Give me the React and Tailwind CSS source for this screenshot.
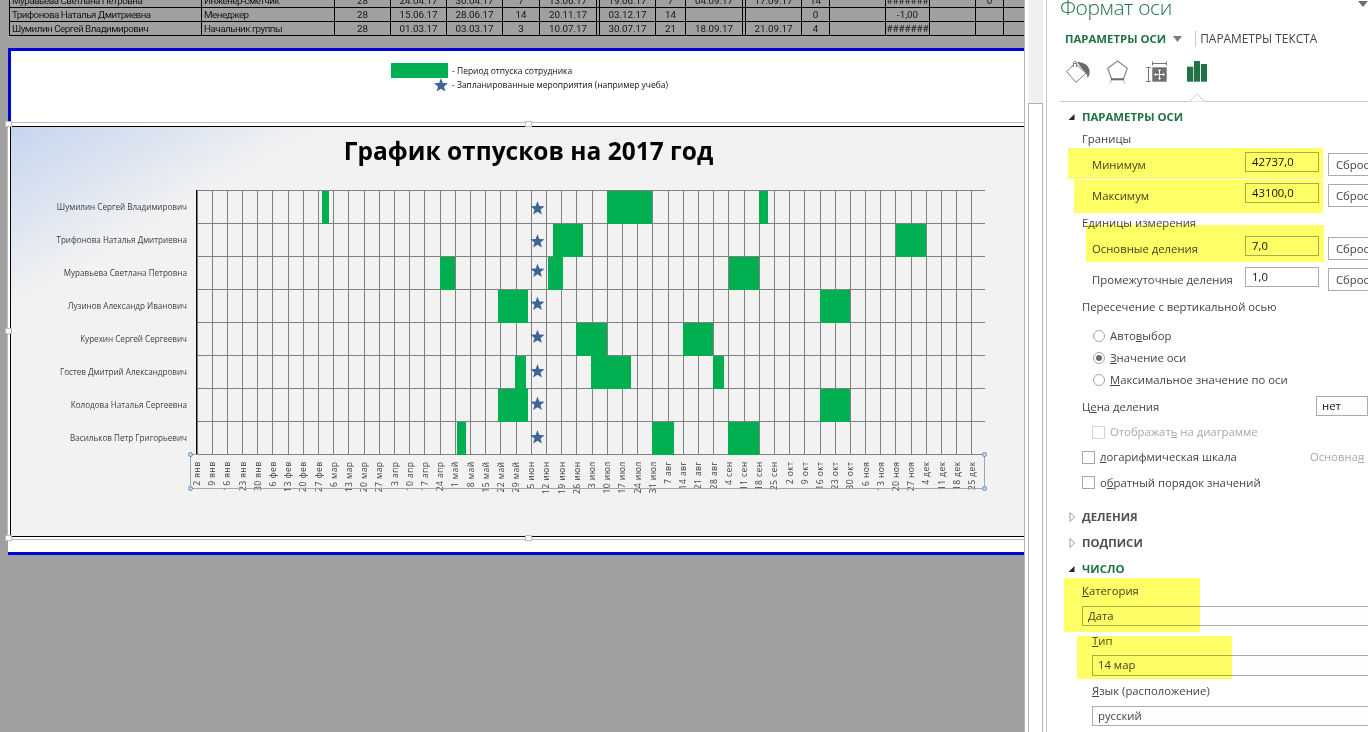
const BARS = [
  [[322, 329], [607, 652], [759, 768]],
  [[553, 583], [896, 926]],
  [[440, 455], [548, 563], [729, 759]],
  [[498, 528], [820, 850]],
  [[576, 607], [683, 713]],
  [[515, 526], [591, 631], [713, 724]],
  [[498, 528], [820, 850]],
  [[457, 466], [652, 674], [728, 759]],
];
const NAMES = [
  "Шумилин Сергей Владимирович",
  "Трифонова Наталья Дмитриевна",
  "Муравьева Светлана Петровна",
  "Лузинов Александр Иванович",
  "Курехин Сергей Сергеевич",
  "Гостев Дмитрий Александрович",
  "Колодова Наталья Сергеевна",
  "Васильков Петр Григорьевич",
];
const STAR_Y = [208.5, 241.5, 271, 304, 337, 371.5, 404, 437.5];
const MONTHS = [
  ["янв", [2, 9, 16, 23, 30]], ["фев", [6, 13, 20, 27]], ["мар", [6, 13, 20, 27]], ["апр", [3, 10, 17, 24]],
  ["май", [1, 8, 15, 22, 29]], ["июн", [5, 12, 19, 26]], ["июл", [3, 10, 17, 24, 31]], ["авг", [7, 14, 21, 28]],
  ["сен", [4, 11, 18, 25]], ["окт", [2, 9, 16, 23, 30]], ["ноя", [6, 13, 20, 27]], ["дек", [4, 11, 18, 25]],
];
const TICKS = MONTHS.flatMap(([m, ds]) => ds.map((d) => `${d} ${m}`));
const STEP = 788 / 363 * 7;

const COLS = [192, 133, 56, 56, 56, 37, 57, 3, 56, 30, 57, 3, 56, 28, 56, 44, 46, 28, 21];
const ROWS = [
  ["Муравьева Светлана Петровна", "Инженер-сметчик", "28", "24.04.17", "30.04.17", "7", "13.06.17", "", "19.06.17", "7", "04.09.17", "", "17.09.17", "14", "", "#######", "", "0", ""],
  ["Трифонова Наталья Дмитриевна", "Менеджер", "28", "15.06.17", "28.06.17", "14", "20.11.17", "", "03.12.17", "14", "", "", "", "0", "", "-1,00", "", "", ""],
  ["Шумилин Сергей Владимирович", "Начальник группы", "28", "01.03.17", "03.03.17", "3", "10.07.17", "", "30.07.17", "21", "18.09.17", "", "21.09.17", "4", "", "#######", "", "", ""],
];

function Star({ cx, cy, r = 7.5 }) {
  const pts = [];
  for (let i = 0; i < 10; i++) {
    const rad = i % 2 ? r * 0.42 : r;
    const a = -Math.PI / 2 + (i * Math.PI) / 5;
    pts.push(`${cx + rad * Math.cos(a)},${cy + rad * Math.sin(a)}`);
  }
  return <polygon points={pts.join(" ")} fill="#3d6496" />;
}

function Plot() {
  return (
    <svg width="1000" height="340" viewBox="11 185 1000 340" className="block shrink-0">
      {Array.from({ length: 9 }, (_, i) => (
        <line key={i} x1="196.5" x2="985" y1={190.5 + 33 * i} y2={190.5 + 33 * i} stroke="#808080" />
      ))}
      {TICKS.map((_, i) => {
        const x = Math.floor(197 + i * STEP) + 0.5;
        return <line key={i} x1={x} x2={x} y1="190" y2="454" stroke="#808080" />;
      })}
      <line x1="196.5" x2="196.5" y1="190" y2="454" stroke="#000" />
      {BARS.map((row, r) =>
        row.map(([a, b], i) => <rect key={i} x={a} y={191 + 33 * r} width={b - a} height="33" fill="#00b050" />)
      )}
      {STAR_Y.map((y, i) => <Star key={i} cx={537.5} cy={y} />)}
      {NAMES.map((n, i) => (
        <text key={n} x="187" y={210 + 33 * i} textAnchor="end" fontSize="8.1" fill="#404040">{n}</text>
      ))}
      {TICKS.map((t, i) => (
        <text key={t} transform={`translate(${200 + i * STEP} 461.5) rotate(-90)`} textAnchor="end" fontSize="8.6" letterSpacing="0.4" fill="#404040">{t}</text>
      ))}
      <path d="M190.5 454.5V488.5H984.5V454.5" fill="none" stroke="#a6a6a6" />
      <line x1="190.5" x2="197" y1="454.5" y2="454.5" stroke="#a6a6a6" />
      {[[190.5, 454.5], [190.5, 488.5], [984.5, 454.5], [984.5, 488.5]].map(([x, y]) => (
        <circle key={`${x}-${y}`} cx={x} cy={y} r="2" fill="#cfdcec" stroke="#5f8ab8" />
      ))}
    </svg>
  );
}

function Handle({ className }) {
  return <div className={`absolute w-[7px] h-[6px] bg-white border border-[#bdbdbd] ${className}`} />;
}

function Sheet() {
  return (
    <div className="mt-[12px] ml-[8px] w-[1017px] h-[507px] bg-white border-y-[3px] border-[#0000d8] flex flex-col shrink-0">
      <div className="h-[71px] border-l-[3px] border-[#0000d8] shrink-0 pt-[12px] pl-[380px] text-[8.5px] leading-[14px] text-[#111]">
        <div className="flex items-center h-[15px]">
          <div className="w-[57px] h-[15px] bg-[#00b050]" />
          <span className="ml-[4px]">- Период отпуска сотрудника</span>
        </div>
        <div className="flex items-center h-[14px]">
          <div className="w-[57px] flex justify-end">
            <svg width="16" height="14" viewBox="0 0 16 14"><Star cx={9} cy={7.5} /></svg>
          </div>
          <span className="ml-[4px]">- Запланированные мероприятия (например учеба)</span>
        </div>
      </div>
      <div className="relative h-[418px] -ml-[1px] shrink-0 border-y border-l border-[#bdbdbd] pt-[3px] pb-[2px] pl-[2px]">
        <div className="w-[1037px] h-[411px] border border-black bg-[linear-gradient(150deg,#c5d5ef_0%,#f2f2f2_18%)] flex flex-col">
          <div className="h-[58px] shrink-0 text-center text-[24.5px] font-bold leading-[47px] text-black">График отпусков на 2017 год</div>
          <Plot />
        </div>
        <Handle className="-left-[3px] -top-[2px]" />
        <Handle className="left-[517px] -top-[2px]" />
        <Handle className="-left-[3px] top-[205px]" />
        <Handle className="-left-[3px] top-[412px]" />
        <Handle className="left-[517px] top-[412px]" />
      </div>
    </div>
  );
}

function Table() {
  return (
    <div className="-mt-[7px] ml-[9px] shrink-0">
      <table className="table-fixed border-collapse w-[1016px] text-[9.8px] text-[#161616] font-['Roboto',sans-serif]">
        <colgroup>
          {COLS.map((w, i) => <col key={i} style={{ width: w }} />)}
        </colgroup>
        <tbody>
          {ROWS.map((r, i) => (
            <tr key={i} className="h-[14px]">
              {r.map((c, j) => (
                <td key={j} className={`border border-black p-0 h-[14px] leading-[12px] whitespace-nowrap overflow-hidden ${j < 2 ? "text-left pl-[2px] tracking-[-0.5px]" : "text-center"}`}>{c}</td>
              ))}
            </tr>
          ))}
        </tbody>
      </table>
    </div>
  );
}

function Triangle({ open }) {
  return open ? (
    <svg width="8" height="8" viewBox="0 0 8 8" className="shrink-0"><polygon points="6.5,1 6.5,7 0.5,7" fill="#262626" /></svg>
  ) : (
    <svg width="8" height="12" viewBox="0 0 8 12" className="shrink-0"><polygon points="2,1.5 6.5,6 2,10.5" fill="#fff" stroke="#9a9a9a" /></svg>
  );
}

function Section({ open, green, children, className = "" }) {
  return (
    <div className={`h-[16px] flex items-center pl-[21px] ${className}`}>
      <div className="w-[14px] flex shrink-0"><Triangle open={open} /></div>
      <span className={`text-[11.4px] font-bold leading-[16px] ${green ? "text-[#217346]" : "text-[#505050]"}`}>{children}</span>
    </div>
  );
}

function Label({ className = "", children }) {
  return <div className={`h-[16px] leading-[16px] whitespace-nowrap ${className}`}>{children}</div>;
}

function FieldRow({ label, value, className = "" }) {
  return (
    <div className={`h-[24px] flex items-start pl-[45px] ${className}`}>
      <div className="w-[153px] pt-[5px] leading-[16px] whitespace-nowrap shrink-0">{label}</div>
      <div className="w-[74px] h-[20px] border border-[#ababab] pl-[6px] leading-[18px] text-[#111] bg-white shrink-0">{value}</div>
      <div className="ml-[9px] mt-[1px] w-[60px] h-[23px] border border-[#ababab] bg-white pl-[7px] leading-[21px] shrink-0">Сброс</div>
    </div>
  );
}

function Radio({ checked, children, className = "" }) {
  return (
    <div className={`h-[16px] flex items-center pl-[46px] ${className}`}>
      <div className="w-[12px] h-[12px] rounded-full border border-[#a6a6a6] flex items-center justify-center shrink-0 bg-white">
        {checked && <div className="w-[6px] h-[6px] rounded-full bg-[#6e6e6e]" />}
      </div>
      <span className="ml-[5px] leading-[16px]">{children}</span>
    </div>
  );
}

function Check({ className = "", disabled, children }) {
  return (
    <div className={`h-[16px] flex items-center ${className}`}>
      <div className={`w-[13px] h-[13px] border shrink-0 ${disabled ? "border-[#d4d4d4]" : "border-[#a6a6a6]"}`} />
      <span className={`ml-[5px] leading-[16px] whitespace-nowrap ${disabled ? "text-[#a8a8a8]" : ""}`}>{children}</span>
    </div>
  );
}

function SelectBox({ className = "", children }) {
  return <div className={`border border-[#ababab] w-[400px] pl-[5px] leading-[17px] bg-[#fdfdfd] ${className}`}>{children}</div>;
}

function Panel() {
  return (
    <div className="w-[322px] shrink-0 h-full overflow-hidden bg-white text-[11.3px] text-[#444] flex flex-col relative border-l border-[#c6c6c6]" >
      <div className="-mt-[6px] h-[26px] pl-[13px] text-[21px] font-light tracking-[-0.4px] leading-[26px] text-[#217346] whitespace-nowrap shrink-0">Формат оси</div>
      <svg width="10" height="6" viewBox="0 0 10 6" className="absolute right-0 top-[1px]"><polygon points="0,0 10,0 5,6" fill="#6e6e6e" /></svg>

      <div className="mt-[10px] h-[17px] flex items-center pl-[18px] shrink-0 leading-[17px]">
        <span className="font-bold text-[11.4px] text-[#217346]">ПАРАМЕТРЫ ОСИ</span>
        <svg width="9" height="6" viewBox="0 0 9 6" className="ml-[7px]"><polygon points="0,0 9,0 4.5,6" fill="#7a7a7a" /></svg>
        <div className="ml-[13px] w-px h-[16px] bg-[#c6c6c6]" />
        <span className="ml-[4px] text-[11.9px]">ПАРАМЕТРЫ ТЕКСТА</span>
      </div>

      <div className="mt-[13px] h-[23px] flex items-start pl-[19px] shrink-0">
        <svg width="24" height="24" viewBox="0 0 24 24" fill="none">
          <path d="M0.7 11.7L9 3L20 13.3L10 22.3Z" stroke="#7a7a7a" />
          <path d="M7.5 7V3C7.5 0.8 10.5 0.8 10.5 3V7" stroke="#7a7a7a" />
          <path d="M11 2C16 2 22 4 23.5 10C24 14 23 16 21.5 18C21.5 15 20.5 13 18 11Z" fill="#6a6a6a" />
        </svg>
        <svg width="22" height="24" viewBox="0 0 22 24" fill="none" className="ml-[17px]">
          <polygon points="10.5,1 20.3,8.3 16.3,19.3 4.7,19.3 0.7,8.3" stroke="#8a8a8a" strokeWidth="1.2" />
          <line x1="4" y1="19.3" x2="17" y2="19.3" stroke="#6a6a6a" strokeWidth="2" />
          <path d="M4.5 20L3 23.5M16.5 20L18 23.5" stroke="#c4c4c4" strokeWidth="1.2" />
        </svg>
        <svg width="22" height="22" viewBox="0 0 22 22" fill="none" className="ml-[17px] mt-[1px]">
          <path d="M6.3 2.5H20.7M6.5 .5V4.5M20.5 .5V4.5M2.5 6.5V20.5M.3 6.5H4.7M.3 20.5H4.7" stroke="#757575" />
          <rect x="6.3" y="6.3" width="14.4" height="14.4" fill="#707070" />
          <path d="M13.5 9V18M9 13.5H18" stroke="#fff" />
          <path d="M13.5 8L11.8 10H15.2ZM13.5 19L11.8 17H15.2ZM8 13.5L10 11.8V15.2ZM19 13.5L17 11.8V15.2Z" fill="#fff" />
        </svg>
        <svg width="20" height="22" viewBox="0 0 20 22" className="ml-[19px] mt-[1px]">
          <rect x="0" y="5.7" width="6.3" height="15" fill="#217346" />
          <rect x="7" y="0" width="6" height="20.7" fill="#217346" />
          <rect x="14" y="3" width="6" height="17.7" fill="#217346" />
        </svg>
      </div>

      <div className="relative mt-[18px] ml-[13px] h-px bg-[#c8c8c8] shrink-0">
        <svg width="16" height="9" viewBox="0 0 16 9" className="absolute left-[129px] -top-[8px]">
          <polygon points="0,8.5 8,0.5 16,8.5" fill="#fff" />
          <path d="M0.5 8.5L8 0.7L15.5 8.5" fill="none" stroke="#c8c8c8" />
        </svg>
      </div>

      <Section open green className="mt-[7px] shrink-0">ПАРАМЕТРЫ ОСИ</Section>
      <Label className="mt-[6px] pl-[35px] shrink-0">Границы</Label>
      <FieldRow className="mt-[5px] shrink-0" label="Минимум" value="42737,0" />
      <FieldRow className="mt-[7px] shrink-0" label="Максимум" value="43100,0" />
      <Label className="mt-[8px] pl-[35px] shrink-0">Единицы измерения</Label>
      <FieldRow className="mt-[5px] shrink-0" label="Основные деления" value="7,0" />
      <FieldRow className="mt-[7px] shrink-0" label="Промежуточные деления" value="1,0" />
      <Label className="mt-[8px] pl-[35px] shrink-0">Пересечение с вертикальной осью</Label>
      <Radio className="mt-[13px] shrink-0">Авто<u>в</u>ыбор</Radio>
      <Radio checked className="mt-[6px] shrink-0"><u>З</u>начение оси</Radio>
      <Radio className="mt-[6px] shrink-0"><u>М</u>аксимальное значение по оси</Radio>
      <div className="mt-[8px] h-[20px] pl-[35px] flex items-center shrink-0">
        <div className="w-[234px] pt-[2px] shrink-0">Ц<u>е</u>на деления</div>
        <SelectBox className="h-[20px] text-[#111]">нет</SelectBox>
      </div>
      <Check disabled className="mt-[8px] pl-[45px] shrink-0">Отображат<u>ь</u> на диаграмме</Check>
      <div className="mt-[9px] flex items-center shrink-0">
        <Check className="pl-[35px]"><u>л</u>огарифмическая шкала</Check>
        <span className="ml-[73px] text-[#a8a8a8] whitespace-nowrap">Основна<u>я</u></span>
      </div>
      <Check className="mt-[9px] pl-[35px] shrink-0">о<u>б</u>ратный порядок значений</Check>
      <Section className="mt-[18px] shrink-0">ДЕЛЕНИЯ</Section>
      <Section className="mt-[10px] shrink-0">ПОДПИСИ</Section>
      <Section open green className="mt-[10px] shrink-0">ЧИСЛО</Section>
      <Label className="mt-[6px] pl-[35px] shrink-0"><u>К</u>атегория</Label>
      <div className="mt-[7px] pl-[35px] shrink-0"><SelectBox className="h-[20px]">Дата</SelectBox></div>
      <Label className="mt-[7px] pl-[45px] shrink-0"><u>Т</u>ип</Label>
      <div className="mt-[6px] pl-[45px] shrink-0"><SelectBox className="h-[21px]">14 мар</SelectBox></div>
      <Label className="mt-[7px] pl-[45px] shrink-0"><u>Я</u>зык (расположение)</Label>
      <div className="mt-[7px] pl-[45px] shrink-0"><SelectBox className="h-[20px]">русский</SelectBox></div>
    </div>
  );
}

function Highlight({ className }) {
  return <div className={`absolute bg-[#ffff66] mix-blend-multiply pointer-events-none ${className}`} />;
}

export default function App() {
  return (
    <div className="relative w-[1369px] h-[732px] overflow-hidden flex bg-white font-['Open_Sans',sans-serif]">
      <div className="w-[1025px] h-full shrink-0 bg-[#a0a0a0] border-r border-[#b4b4b4] flex flex-col overflow-hidden">
        <Table />
        <Sheet />
      </div>
      <div className="w-[21px] h-full shrink-0 pl-[3px] pr-[3px] flex flex-col bg-white">
        <div className="h-[103px] bg-[#f0f0f0] shrink-0" />
        <div className="flex-1 border-x border-t border-[#b4b4b4]" />
      </div>
      <Panel />
      <Highlight className="left-[1068px] top-[148px] w-[255px] h-[31px]" />
      <Highlight className="left-[1074px] top-[180px] w-[249px] h-[33px]" />
      <Highlight className="left-[1086px] top-[225px] w-[238px] h-[37px]" />
      <Highlight className="left-[1064px] top-[578px] w-[136px] h-[54px]" />
      <Highlight className="left-[1077px] top-[636px] w-[155px] h-[43px]" />
    </div>
  );
}
